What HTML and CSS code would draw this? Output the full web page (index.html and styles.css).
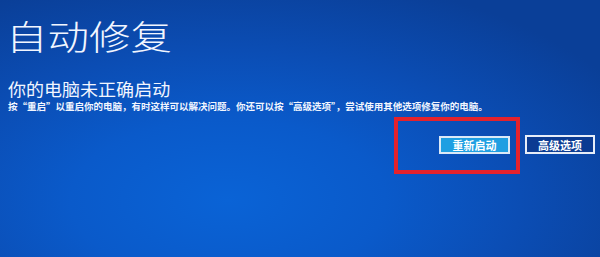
FILE: index.html
```html
<!DOCTYPE html>
<html lang="zh-CN">
<head>
<meta charset="utf-8">
<title>自动修复</title>
<link rel="stylesheet" href="styles.css">
</head>
<body>
<main class="screen">
  <h1 class="title">自动修复</h1>
  <h2 class="subtitle">你的电脑未正确启动</h2>
  <p class="desc">按“重启”以重启你的电脑，有时这样可以解决问题。你还可以按“高级选项”，尝试使用其他选项修复你的电脑。</p>
  <div class="actions">
    <div class="highlight">
      <button class="btn btn-primary">重新启动</button>
    </div>
    <button class="btn btn-secondary">高级选项</button>
  </div>
</main>
</body>
</html>
```

FILE: styles.css
```css
html, body {
  margin: 0;
  padding: 0;
}
body {
  width: 600px;
  height: 257px;
  overflow: hidden;
  font-family: "Noto Sans CJK SC", "Noto Sans", sans-serif;
  color: #f2f6ff;
  background:
    radial-gradient(ellipse 75% 90% at 38% 78%, #0a63d6 0%, #0a5aca 35%, #0b4db4 65%, #0a3f98 100%);
}
.screen {
  padding: 0 5px 0 6px;
}
.title {
  width: max-content;
  margin: 0;
  padding-top: 19px;
  font-size: 34px;
  line-height: 34px;
  font-weight: 300;
  transform: scaleX(1.22);
  transform-origin: left center;
}
.subtitle {
  width: max-content;
  margin: 27px 0 0 2px;
  font-size: 17px;
  line-height: 17px;
  font-weight: 400;
  transform: scaleX(1.06);
  transform-origin: left center;
}
.desc {
  width: max-content;
  margin: 4px 0 0 2px;
  font-size: 9.5px;
  line-height: 10px;
  font-weight: 700;
}
.actions {
  display: flex;
  justify-content: flex-end;
  align-items: flex-start;
  gap: 5px;
  margin-top: 6px;
}
.highlight {
  box-sizing: border-box;
  width: 126px;
  height: 57px;
  border: 4px solid #e4222c;
  padding: 15px 6px 0 0;
  display: flex;
  justify-content: flex-end;
  align-items: flex-start;
}
.btn {
  box-sizing: border-box;
  margin: 0;
  padding: 0;
  font-family: "Noto Sans CJK SC", sans-serif;
  font-size: 11px;
  font-weight: 700;
  color: #ffffff;
  line-height: 14px;
  display: flex;
  align-items: center;
  justify-content: center;
}
.btn-primary {
  width: 71px;
  height: 18px;
  background: #1f9fe2;
  border: 2px solid #dbe9f7;
}
.btn-secondary {
  width: 70px;
  height: 19px;
  margin-top: 18px;
  background: #0b3b92;
  border: 2px solid #e6edf8;
}
```
